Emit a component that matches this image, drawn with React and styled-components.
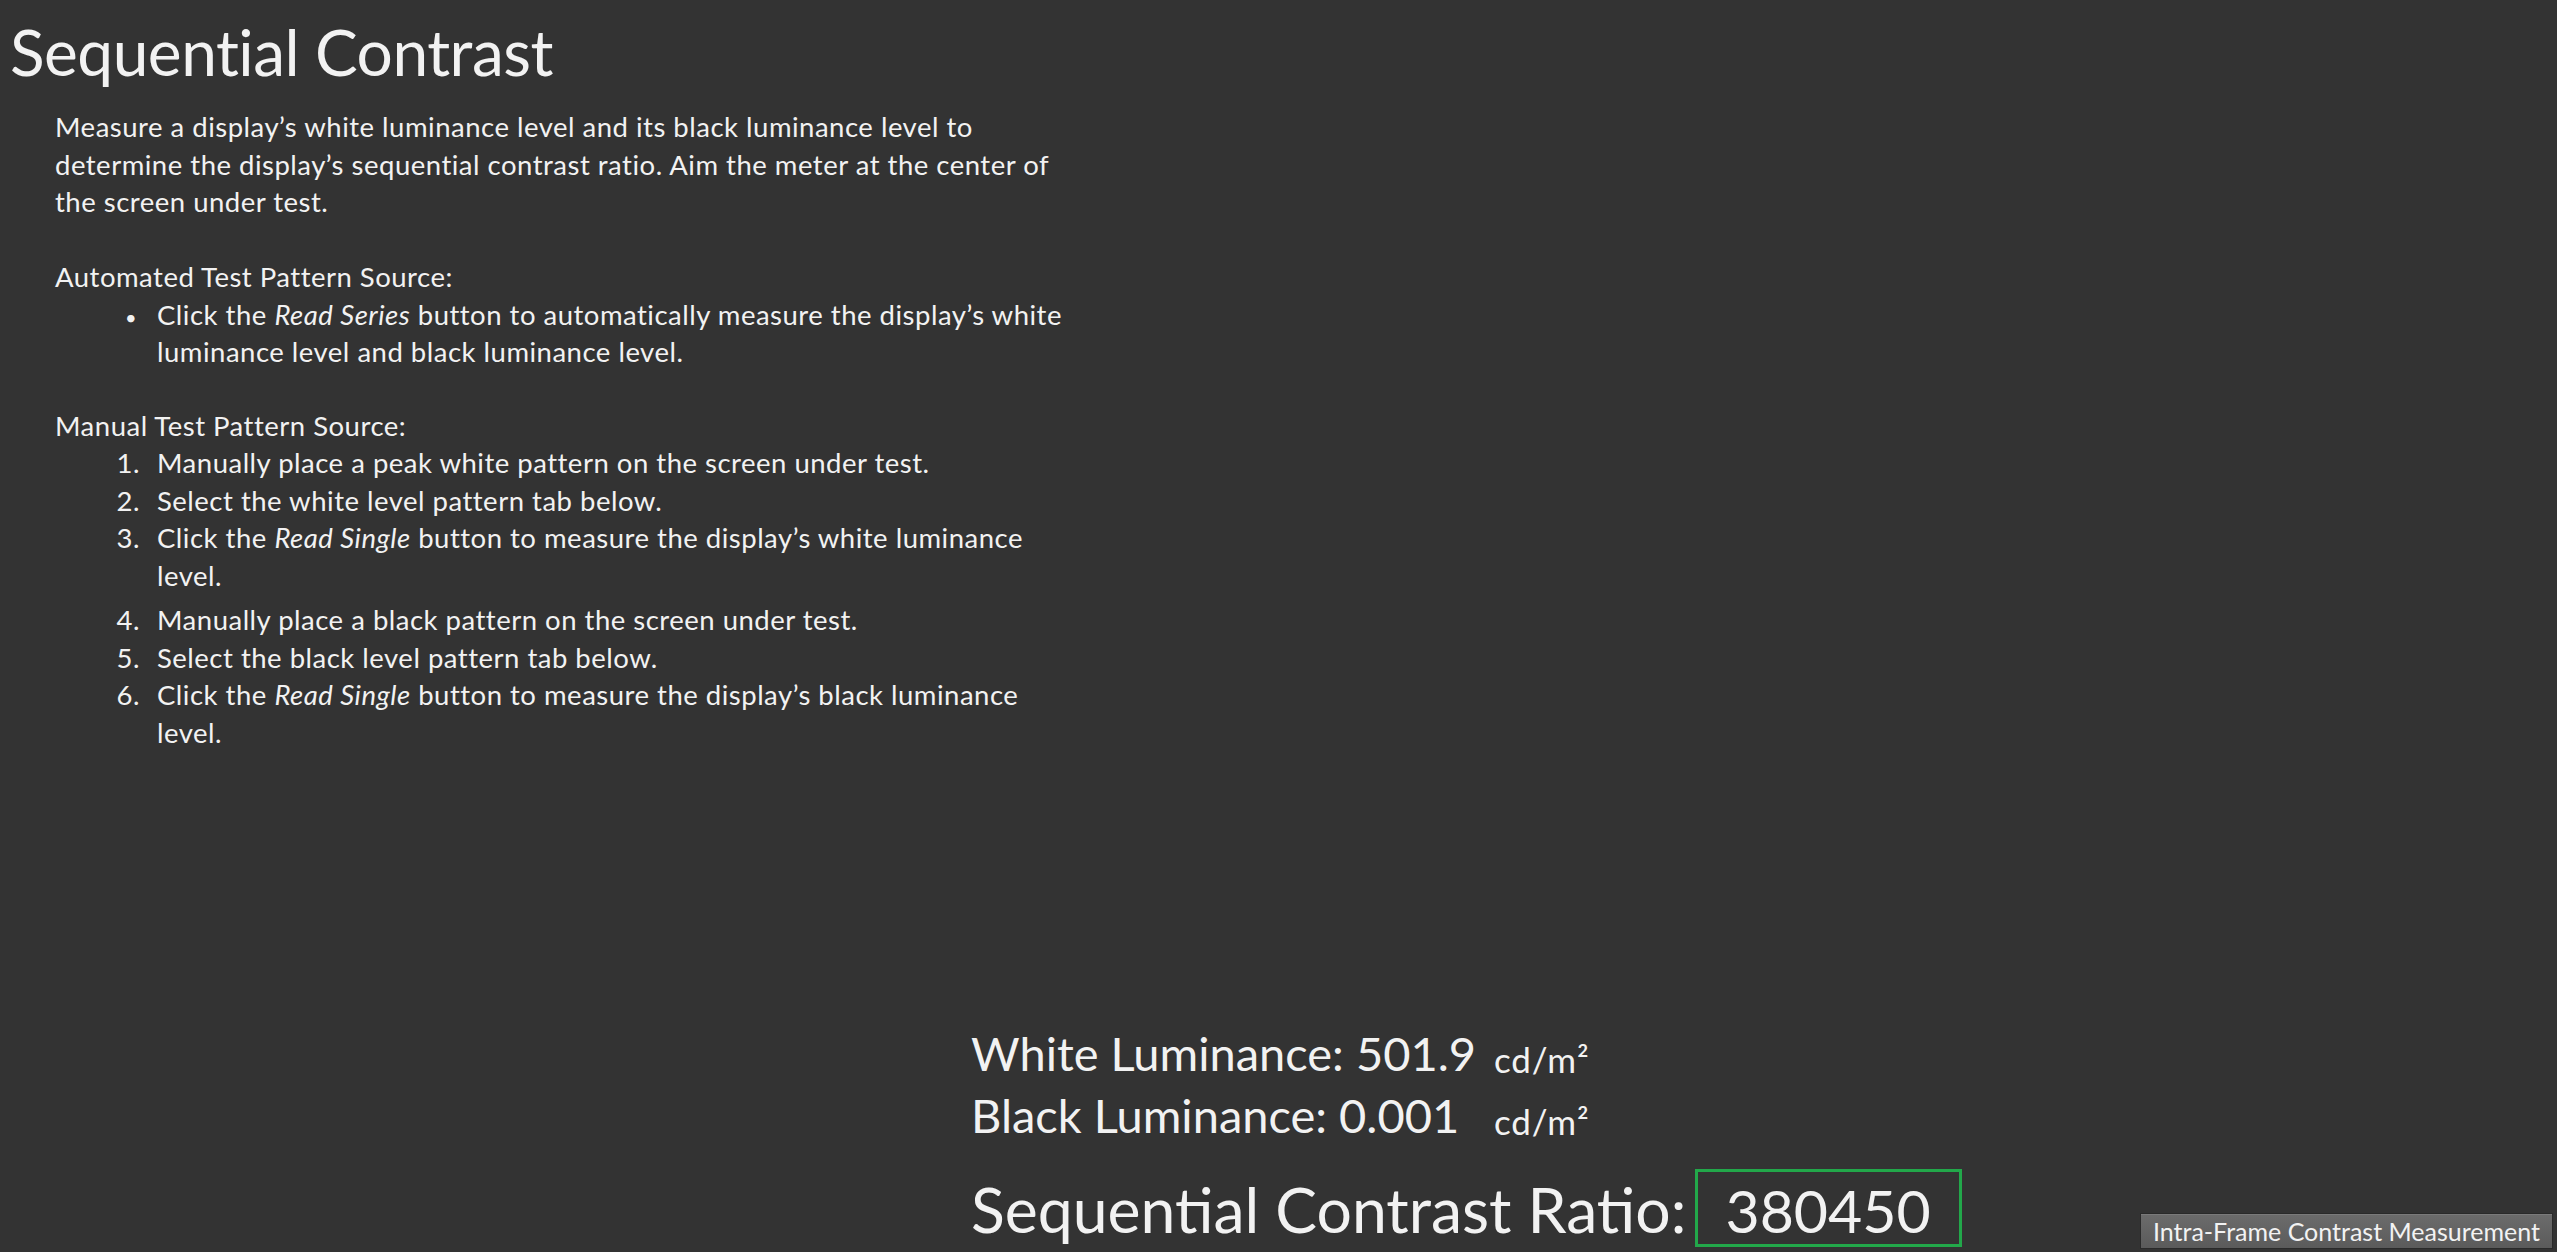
import styled, { createGlobalStyle } from "styled-components";

const GlobalStyle = createGlobalStyle`
  html, body {
    margin: 0;
    padding: 0;
    background: #333333;
  }
  body {
    font-family: Lato, "Open Sans", sans-serif;
    color: #f2f2f2;
  }
`;

const Page = styled.div`
  display: flex;
  flex-direction: column;
  height: 100vh;
  overflow: hidden;
`;

const Title = styled.h1`
  margin: 13px 0 18px 10px;
  font-size: 64px;
  line-height: 77px;
  font-weight: 400;
  letter-spacing: -0.5px;
`;

const Body = styled.div`
  padding-left: 55px;
  font-size: 27.5px;
  line-height: 37.5px;
  letter-spacing: 0.5px;
  white-space: nowrap;
`;

const Para = styled.p`
  margin: 0 0 ${(p) => p.$after || 0}px;
`;

const List = styled.div`
  display: flex;
  flex-direction: column;
  margin-bottom: ${(p) => p.$after || 0}px;
`;

const Item = styled.div`
  display: grid;
  grid-template-columns: 85px 1fr;
  column-gap: 17px;
  align-items: baseline;
  margin-bottom: ${(p) => p.$after || 0}px;
`;

const Marker = styled.span`
  text-align: right;
  font-size: ${(p) => (p.$bullet ? 20 : 27.5)}px;
  padding-right: ${(p) => (p.$bullet ? 3 : 0)}px;
`;

const Bottom = styled.div`
  margin-top: auto;
  display: flex;
  align-items: flex-end;
  padding: 0 4px 3px 971px;
`;

const Results = styled.div`
  display: flex;
  flex-direction: column;
  padding-bottom: 2px;
`;

const Readings = styled.div`
  display: grid;
  grid-template-columns: 523px auto;
  grid-auto-rows: 62px;
  align-items: baseline;
  margin-bottom: 23px;
`;

const Reading = styled.span`
  font-size: 47px;
  line-height: 62px;
`;

const Unit = styled.span`
  font-size: 35px;
  line-height: 1;
  letter-spacing: 0.8px;
  transform: translateY(2px);
`;

const RatioRow = styled.div`
  display: flex;
  align-items: baseline;
  gap: 9px;
`;

const RatioLabel = styled.span`
  font-size: 62.5px;
  line-height: 72px;
`;

const RatioBox = styled.span`
  box-sizing: border-box;
  height: 78px;
  border: 3px solid #22a84a;
  padding: 5px 28px 0 27px;
  font-size: 59px;
  line-height: 67px;
`;

const TabButton = styled.button`
  margin-left: auto;
  width: 413px;
  height: 36px;
  padding: 0;
  border: 1px solid #2a2a2a;
  box-shadow: inset 0 1px 0 #7a7a7a;
  background: linear-gradient(#6c6c6c, #5b5b5b);
  color: #f2f2f2;
  font-family: Lato, "Open Sans", sans-serif;
  font-size: 25px;
  line-height: 34px;
  cursor: pointer;
`;

export default function App() {
  return (
    <>
      <GlobalStyle />
      <Page>
        <Title>Sequential Contrast</Title>
        <Body>
          <Para $after={37.5}>
            Measure a display’s white luminance level and its black luminance level to
            <br />
            determine the display’s sequential contrast ratio. Aim the meter at the center of
            <br />
            the screen under test.
          </Para>
          <Para>Automated Test Pattern Source:</Para>
          <List $after={36}>
            <Item>
              <Marker $bullet>•</Marker>
              <span>
                Click the <em>Read Series</em> button to automatically measure the display’s white
                <br />
                luminance level and black luminance level.
              </span>
            </Item>
          </List>
          <Para>Manual Test Pattern Source:</Para>
          <List>
            <Item>
              <Marker>1.</Marker>
              <span>Manually place a peak white pattern on the screen under test.</span>
            </Item>
            <Item>
              <Marker>2.</Marker>
              <span>Select the white level pattern tab below.</span>
            </Item>
            <Item $after={7}>
              <Marker>3.</Marker>
              <span>
                Click the <em>Read Single</em> button to measure the display’s white luminance
                <br />
                level.
              </span>
            </Item>
            <Item>
              <Marker>4.</Marker>
              <span>Manually place a black pattern on the screen under test.</span>
            </Item>
            <Item>
              <Marker>5.</Marker>
              <span>Select the black level pattern tab below.</span>
            </Item>
            <Item>
              <Marker>6.</Marker>
              <span>
                Click the <em>Read Single</em> button to measure the display’s black luminance
                <br />
                level.
              </span>
            </Item>
          </List>
        </Body>
        <Bottom>
          <Results>
            <Readings>
              <Reading>White Luminance: 501.9</Reading>
              <Unit>cd/m²</Unit>
              <Reading>Black Luminance: 0.001</Reading>
              <Unit>cd/m²</Unit>
            </Readings>
            <RatioRow>
              <RatioLabel>Sequential Contrast Ratio:</RatioLabel>
              <RatioBox>380450</RatioBox>
            </RatioRow>
          </Results>
          <TabButton>Intra-Frame Contrast Measurement</TabButton>
        </Bottom>
      </Page>
    </>
  );
}
